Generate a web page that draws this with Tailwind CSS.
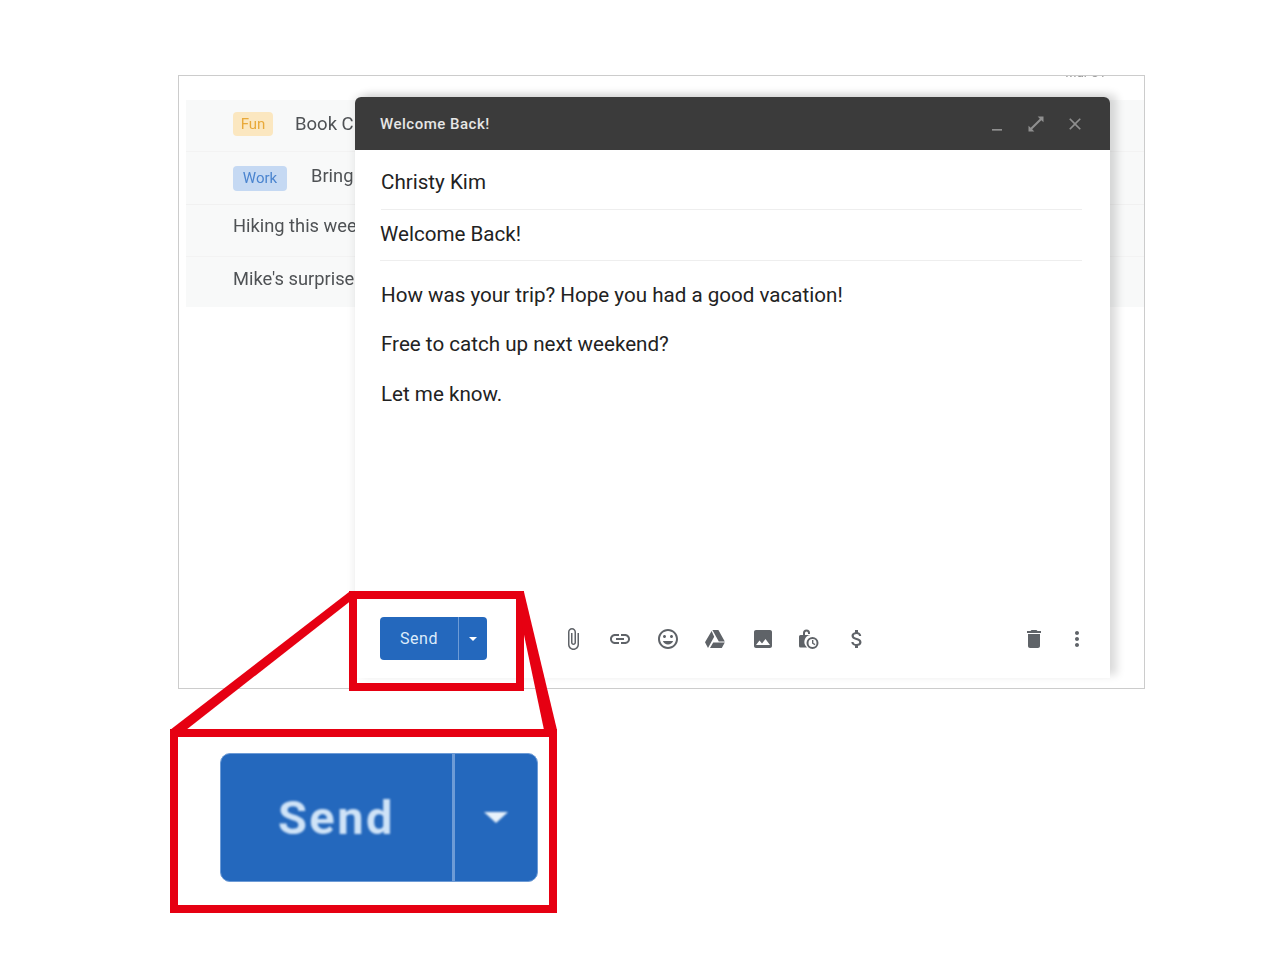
<!DOCTYPE html>
<html lang="en">
  <head>
    <meta charset="UTF-8" />
    <meta name="viewport" content="width=device-width, initial-scale=1.0" />
    <title>Send an email</title>
    <script src="https://cdn.jsdelivr.net/npm/@tailwindcss/browser@4"></script>
  </head>
  <body class="relative w-[1280px] h-[960px] overflow-hidden bg-white font-['Roboto',sans-serif]">
    <!-- mail window -->
    <div class="relative ml-[178px] mt-[75px] w-[967px] h-[614px] border border-[#cccccc] bg-white overflow-hidden">
      <div class="absolute -top-[13px] right-[38px] text-[13px] text-[#999] blur-[0.4px]">Mar 31</div>

      <div class="mt-[24px] ml-[7px] bg-[#f8f9f9] text-[#4f5255] blur-[0.4px]">
        <div class="flex items-center h-[52px] pb-[3px] pl-[47px] border-b border-[#f3f3f3]">
          <span class="flex items-center justify-center w-[40px] h-[24px] rounded-[4px] bg-[#fbe7c0] text-[#e8a93a] text-[15px]">Fun</span>
          <span class="ml-[22px] mt-[2px] text-[18.5px] whitespace-nowrap">Book Club</span>
        </div>
        <div class="flex items-center h-[53px] pl-[47px] border-b border-[#f1f1f1]">
          <span class="flex items-center justify-center w-[54px] h-[25px] rounded-[4px] bg-[#c5d9f3] text-[#4a84cf] text-[15px]">Work</span>
          <span class="ml-[24px] mb-[4px] text-[18.3px] whitespace-nowrap">Bring</span>
        </div>
        <div class="flex items-center h-[52px] pb-[10px] pl-[47px] border-b border-[#f3f3f3] text-[18.3px] whitespace-nowrap">Hiking this weekend</div>
        <div class="flex items-center h-[50px] pb-[6px] pl-[47px] text-[18.3px] whitespace-nowrap">Mike's surprise party</div>
      </div>

      <!-- compose window -->
      <div class="absolute left-[176px] top-[21px] w-[755px] h-[581px] flex flex-col bg-white rounded-t-[6px] shadow-[7px_-3px_8px_rgba(0,0,0,0.14),-3px_-3px_6px_rgba(0,0,0,0.05)]">
        <div class="flex items-center h-[53px] pl-[25px] pr-[25px] bg-[#3b3b3b] rounded-t-[6px]">
          <span class="text-[15px] tracking-[0.5px] font-medium text-[#e6e6e6] pt-[2px]">Welcome Back!</span>
          <div class="ml-auto flex items-center gap-[19px] text-[#8f8f8f]">
            <svg class="w-[20px] h-[20px]" viewBox="0 0 24 24" fill="currentColor"><path d="M6 18h12v2H6z" /></svg>
            <svg class="w-[20px] h-[20px]" viewBox="0 0 24 24" fill="currentColor"><path d="M21 3h-7l2.6 2.6-11 11L3 14v7h7l-2.6-2.6 11-11L21 10z" /></svg>
            <svg class="w-[20px] h-[20px]" viewBox="0 0 24 24" fill="currentColor"><path d="M19 6.41L17.59 5 12 10.59 6.41 5 5 6.41 10.59 12 5 17.59 6.41 19 12 13.41 17.59 19 19 17.59 13.41 12z" /></svg>
          </div>
        </div>

        <div class="ml-[26px] mr-[28px] h-[60px] pt-[6px] flex items-center border-b border-[#eeeeee] text-[20.6px] text-[#222]">Christy Kim</div>
        <div class="ml-[25px] mr-[28px] h-[51px] pb-[2px] flex items-center border-b border-[#eeeeee] text-[20.6px] text-[#222]">Welcome Back!</div>

        <div class="ml-[26px] mt-[9.6px] text-[20.6px] leading-[49.5px] text-[#222]">
          <p>How was your trip? Hope you had a good vacation!</p>
          <p>Free to catch up next weekend?</p>
          <p>Let me know.</p>
        </div>

        <!-- toolbar -->
        <div class="mt-auto mb-[18px] flex items-center h-[43px] pl-[25px] pr-[21px] text-[#5f6368]">
          <div class="flex w-[107px] h-[43px] rounded-[4px] bg-[#2468bd] text-[#dcebfa]">
            <span class="flex items-center justify-center w-[78px] text-[16px] tracking-[0.6px]">Send</span>
            <span class="flex items-center justify-center flex-1 border-l border-[#6d9bd6]">
              <span class="w-0 h-0 border-x-[4px] border-t-[4px] border-x-transparent border-t-white"></span>
            </span>
          </div>
          <span class="ml-[43px] mt-[16px] w-[6px] h-[1px] bg-[#8a8a8a]"></span>
          <div class="ml-[25px] flex items-center gap-[23.4px] blur-[0.3px]">
            <svg class="w-[24px] h-[24px]" viewBox="0 0 24 24" fill="currentColor"><path d="M16.5 6v11.5c0 2.21-1.79 4-4 4s-4-1.79-4-4V5c0-1.38 1.12-2.5 2.5-2.5s2.5 1.12 2.5 2.5v10.5c0 .55-.45 1-1 1s-1-.45-1-1V6H10v9.5c0 1.38 1.12 2.5 2.5 2.5s2.5-1.12 2.5-2.5V5c0-2.21-1.79-4-4-4S7 2.79 7 5v12.5c0 3.04 2.46 5.5 5.5 5.5s5.5-2.46 5.5-5.5V6h-1.5z" /></svg>
            <svg class="w-[24px] h-[24px]" viewBox="0 0 24 24" fill="currentColor"><path d="M3.9 12c0-1.71 1.39-3.1 3.1-3.1h4V7H7c-2.76 0-5 2.24-5 5s2.24 5 5 5h4v-1.9H7c-1.71 0-3.1-1.39-3.1-3.1zM8 13h8v-2H8v2zm9-6h-4v1.9h4c1.71 0 3.1 1.39 3.1 3.1s-1.39 3.1-3.1 3.1h-4V17h4c2.76 0 5-2.24 5-5s-2.24-5-5-5z" /></svg>
            <svg class="w-[24px] h-[24px]" viewBox="0 0 24 24" fill="currentColor"><path d="M11.99 2C6.47 2 2 6.48 2 12s4.47 10 9.99 10C17.52 22 22 17.52 22 12S17.52 2 11.99 2zM12 20c-4.42 0-8-3.58-8-8s3.58-8 8-8 8 3.58 8 8-3.58 8-8 8zm3.5-9c.83 0 1.5-.67 1.5-1.5S16.33 8 15.5 8 14 8.67 14 9.5s.67 1.5 1.5 1.5zm-7 0c.83 0 1.5-.67 1.5-1.5S9.33 8 8.5 8 7 8.67 7 9.5 7.67 11 8.5 11zm3.5 6.5c2.33 0 4.31-1.46 5.11-3.5H6.89c.8 2.04 2.78 3.5 5.11 3.5z" /></svg>
            <svg class="w-[24px] h-[24px]" viewBox="0 0 24 24" fill="currentColor"><path d="M8.6 4 2 15.2l3 5.8 6.2-11.3zM10.2 15.5 7 21h11.8l3-5.5zM21.8 14.5 15.4 3H9.4l6.4 11.5z" /></svg>
            <svg class="w-[24px] h-[24px]" viewBox="0 0 24 24" fill="currentColor"><path d="M21 19V5c0-1.1-.9-2-2-2H5c-1.1 0-2 .9-2 2v14c0 1.1.9 2 2 2h14c1.1 0 2-.9 2-2zM8.5 13.5l2.5 3.01L14.5 12l4.5 6H5l3.5-4.5z" /></svg>
            <svg class="w-[24px] h-[24px]" viewBox="0 0 24 24" fill="currentColor"><path d="M5 8V6a3.5 3.5 0 0 1 7 0v1h-2V6a1.5 1.5 0 0 0-3 0v2h5.5a7 7 0 0 0-3.4 12.5H2.5A1.5 1.5 0 0 1 1 19V9.5A1.5 1.5 0 0 1 2.5 8z" /><path fill-rule="evenodd" d="M14.5 10a6 6 0 1 1 0 12 6 6 0 0 1 0-12zm0 2a4 4 0 1 0 0 8 4 4 0 0 0 0-8zM14 13h1.4v2.9l2 1.2-.7 1.1-2.7-1.6z" /></svg>
            <svg class="w-[24px] h-[24px]" viewBox="0 0 24 24" fill="currentColor"><path d="M11.8 10.9c-2.27-.59-3-1.2-3-2.15 0-1.09 1.01-1.85 2.7-1.85 1.78 0 2.44.85 2.5 2.1h2.21c-.07-1.72-1.12-3.3-3.21-3.81V3h-3v2.16c-1.94.42-3.5 1.68-3.5 3.61 0 2.31 1.91 3.46 4.7 4.13 2.5.6 3 1.48 3 2.41 0 .69-.49 1.79-2.7 1.79-2.06 0-2.87-.92-2.98-2.1h-2.2c.12 2.19 1.76 3.42 3.68 3.83V21h3v-2.15c1.95-.37 3.5-1.5 3.5-3.55 0-2.84-2.43-3.81-4.7-4.4z" /></svg>
          </div>
          <div class="ml-auto flex items-center gap-[19px] blur-[0.3px]">
            <svg class="w-[24px] h-[24px]" viewBox="0 0 24 24" fill="currentColor"><path d="M6 19c0 1.1.9 2 2 2h8c1.1 0 2-.9 2-2V7H6v12zM19 4h-3.5l-1-1h-5l-1 1H5v2h14V4z" /></svg>
            <svg class="w-[24px] h-[24px]" viewBox="0 0 24 24" fill="currentColor"><path d="M12 8c1.1 0 2-.9 2-2s-.9-2-2-2-2 .9-2 2 .9 2 2 2zm0 2c-1.1 0-2 .9-2 2s.9 2 2 2 2-.9 2-2-.9-2-2-2zm0 6c-1.1 0-2 .9-2 2s.9 2 2 2 2-.9 2-2-.9-2-2-2z" /></svg>
          </div>
        </div>
      </div>
    </div>

    <!-- enlarged send button -->
    <div class="ml-[170px] mt-[40px] w-[387px] h-[184px] border-[8px] border-[#e60012] pt-[16px] pl-[42px]">
      <div class="flex w-[318px] h-[129px] rounded-[10px] bg-[#2468bd] border border-[#6d9bd6] text-[#cfe3f7]">
        <span class="flex items-center justify-center w-[231px] pt-[2px] text-[47px] tracking-[2.5px] font-bold blur-[1px]">Send</span>
        <span class="flex items-center justify-center flex-1 border-l-[3px] border-[#6d9bd6]">
          <span class="w-0 h-0 border-x-[12px] border-t-[11px] border-x-transparent border-t-[#e8f2fb] blur-[1px]"></span>
        </span>
      </div>
    </div>

    <!-- red callout over the small button -->
    <div class="absolute left-[349px] top-[591px] w-[175px] h-[100px] border-[8px] border-[#e60012]"></div>
    <svg class="absolute left-0 top-0 w-[1280px] h-[960px] pointer-events-none" viewBox="0 0 1280 960" fill="#e60012">
      <path d="M349 592 L362 592 L186 730 L170 730 Z" />
      <path d="M515 592 L524 592 L557 730 L544 730 Z" />
    </svg>
  </body>
</html>
